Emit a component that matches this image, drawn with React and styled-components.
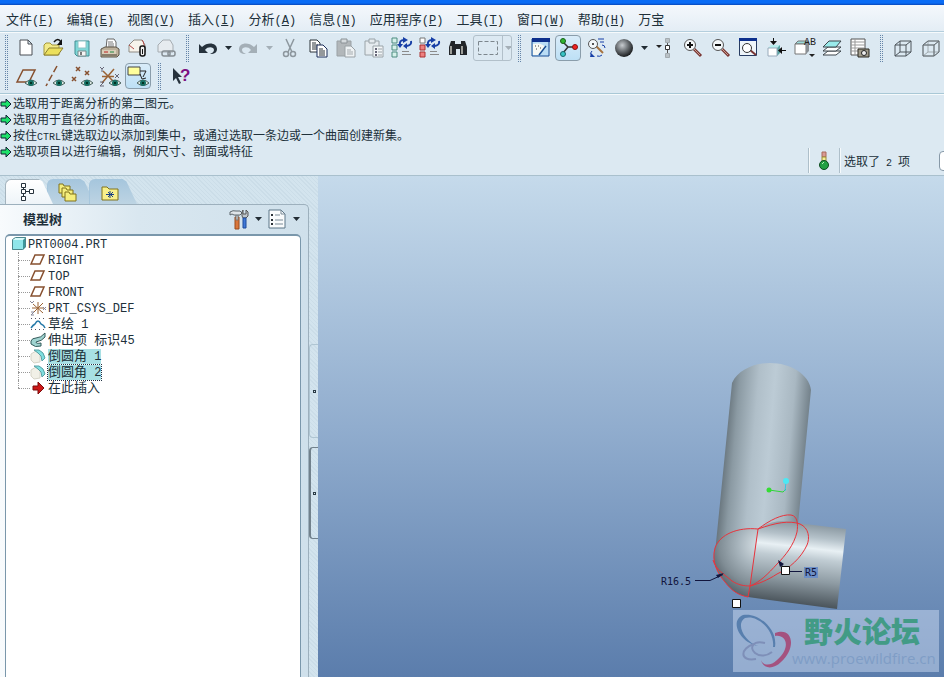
import React from "react";
import styled, { createGlobalStyle } from "styled-components";

const GlobalStyle = createGlobalStyle`
  *, *::before, *::after {
    box-sizing: border-box;
  }
  body {
    margin: 0;
    overflow: hidden;
  }
  button {
    font: inherit;
    color: inherit;
    border: 0;
    padding: 0;
    background: none;
  }
`;

const Window = styled.div`
  display: flex;
  flex-direction: column;
  height: 100vh;
  background: #dce9f2;
  color: #20303a;
  font-family: "Liberation Mono", "Noto Sans CJK SC", monospace;
  font-size: 13px;
`;
const TitleEdge = styled.div`
  flex: none;
  height: 5px;
  background: linear-gradient(#0a6cf5 60%, #0a48b8);
`;
const MenuBar = styled.nav`
  flex: none;
  display: flex;
  gap: 13px;
  height: 27px;
  padding: 5px 6px 0;
  background: linear-gradient(#f4f8fc, #e4edf5);
  border-bottom: 1px solid #b4cedd;
`;
const MenuButton = styled.button`
  white-space: nowrap;
  line-height: 20px;
`;
const Ascii = styled.span`
  font-size: ${(props) => (props.$small ? 10 : 12)}px;
  white-space: pre;
`;

const ToolArea = styled.div`
  flex: none;
  height: 62px;
  padding-top: 1px;
  overflow: hidden;
  border-top: 1px solid #f6fafc;
  border-bottom: 1px solid #a9c8d6;
`;
const ToolRow = styled.div`
  display: flex;
  height: 28px;
  align-items: center;
`;
const Grip = styled.span`
  flex: none;
  width: ${(props) => props.$width}px;
  height: 27px;
  display: flex;
  justify-content: center;
  &::before {
    content: "";
    width: 3px;
    border: dotted #6484a8;
    border-width: 0 1px;
  }
`;
const ToolButton = styled.button`
  flex: none;
  display: flex;
  align-items: center;
  justify-content: center;
  width: 28px;
  height: 28px;
  border-radius: 4px;
`;
const ActiveTool = styled(ToolButton)`
  width: 26px;
  height: 26px;
  margin: 0 1px;
  border: 1px solid #8a9dab;
  background: linear-gradient(#d9ecf9, #bde0f5);
`;
const DropButton = styled(ToolButton)`
  width: ${(props) => props.$width || 12}px;
`;
const SelectBox = styled.div`
  flex: none;
  display: flex;
  align-items: center;
  width: 39px;
  height: 26px;
  margin-left: 1px;
  overflow: hidden;
  border: 1px solid #b2c0ca;
  border-radius: 3px;
  button + button {
    border-left: 1px solid #b2c0ca;
    border-radius: 0;
  }
`;

const MessageArea = styled.div`
  flex: none;
  display: flex;
  justify-content: space-between;
  height: 82px;
  overflow: hidden;
  font-size: 12px;
  border-top: 1px solid #f6fafc;
  border-bottom: 1px solid #a9c0cd;
`;
const Messages = styled.ul`
  list-style: none;
  margin: 0;
  padding: 2px 0 0;
`;
const Message = styled.li`
  display: flex;
  align-items: center;
  gap: 1px;
  height: 16px;
  line-height: 16px;
  white-space: nowrap;
`;
const Status = styled.div`
  align-self: flex-end;
  display: flex;
  align-items: center;
  height: 29px;
`;
const StatusCell = styled.div`
  display: flex;
  align-items: center;
  justify-content: center;
  height: 25px;
  padding: 0 ${(props) => props.$pad}px;
  border-left: 1px solid #aebfca;
  box-shadow: inset 1px 0 #f6fafc;
`;
const FilterSelect = styled.select`
  width: 60px;
  height: 20px;
  margin: 0 -55px 0 25px;
  border: 1px solid #8799a8;
  border-radius: 4px;
  background: #fff;
`;

const Body = styled.div`
  flex: 1;
  min-height: 0;
  display: flex;
`;
const SidePanel = styled.aside`
  flex: none;
  display: flex;
  width: 318px;
  background: repeating-linear-gradient(45deg, #cbdde8 0 1px, #d3e4ee 1px 3px);
`;
const PanelColumn = styled.div`
  flex: 1;
  display: flex;
  flex-direction: column;
`;
const Tabs = styled.div`
  flex: none;
  display: flex;
  padding: 3px 0 0 5px;
`;
const Tab = styled.button`
  position: relative;
  z-index: ${(props) => (props.$active ? 1 : 0)};
  display: flex;
  align-items: center;
  justify-content: center;
  width: 48px;
  height: 25px;
  margin-right: -6px;
  padding-right: 8px;
  border-radius: 6px 0 0 0;
  clip-path: polygon(0 0, 70% 0, 78% 10%, 100% 100%, 0 100%);
  background: ${(props) =>
    props.$active
      ? "linear-gradient(#ffffff, #eef4f8)"
      : "linear-gradient(#a6c6dd, #bdd4e3)"};
  border-left: 1px solid ${(props) => (props.$active ? "#a4b4be" : "#a6c6dd")};
  border-top: 1px solid ${(props) => (props.$active ? "#a4b4be" : "#a6c6dd")};
`;
const Panel = styled.section`
  flex: 1;
  min-height: 0;
  display: flex;
  flex-direction: column;
  padding-right: 7px;
  border-top: 1px solid #9db0bd;
  border-right: 1px solid #9db0bd;
  border-radius: 0 5px 0 0;
  background: linear-gradient(90deg, #f8fbfd, #d9e7f0 45%, #cfe0eb);
`;
const PanelHeader = styled.header`
  flex: none;
  display: flex;
  align-items: center;
  height: 29px;
  padding: 0 0 2px 23px;
`;
const PanelTitle = styled.h2`
  flex: 1;
  margin: 0;
  font-size: 13px;
  font-weight: bold;
`;
const TreeBox = styled.div`
  flex: 1;
  margin-left: 5px;
  padding: 0 4px;
  background: #fff;
  border: 1px solid #7a97ab;
  border-width: 2px 1px 0;
  border-radius: 5px 5px 0 0;
`;
const TreeList = styled.ul`
  list-style: none;
  margin: 0;
  padding: 0;
`;
const TreeRow = styled.div`
  display: flex;
  align-items: center;
  height: 16px;
  line-height: 16px;
  gap: ${(props) => props.$gap}px;
  padding-left: ${(props) => props.$indent}px;
`;
const Branch = styled.span`
  position: relative;
  flex: none;
  width: 12px;
  height: 16px;
  &::before {
    content: "";
    position: absolute;
    left: 0;
    top: 0;
    height: ${(props) => (props.$last ? 8 : 16)}px;
    border-left: 1px dotted #999;
  }
  &::after {
    content: "";
    position: absolute;
    left: 0;
    right: 0;
    top: 8px;
    border-top: 1px dotted #999;
  }
`;
const TreeLabel = styled.span`
  height: 15px;
  line-height: 15px;
  margin-left: ${(props) => (props.$child ? 2 : 0)}px;
  white-space: pre;
  background: ${(props) => (props.$selected ? "#a8e0e4" : "transparent")};
  outline: ${(props) => (props.$focused ? "1px dotted #234" : "none")};
`;
const Splitter = styled.div`
  flex: none;
  display: flex;
  flex-direction: column;
  gap: 9px;
  width: 9px;
  padding-top: 168px;
`;
const SplitHandle = styled.button`
  display: flex;
  align-items: center;
  justify-content: center;
  height: ${(props) => (props.$strong ? 92 : 94)}px;
  border: solid ${(props) => (props.$strong ? "#71818c" : "#afc5d2")};
  border-width: 1px 0 1px ${(props) => (props.$strong ? 2 : 1)}px;
  border-radius: 4px 0 0 4px;
  &::before {
    content: "";
    width: 3px;
    height: 3px;
    border: 1px solid #2a3a44;
  }
`;

const Viewport = styled.main`
  position: relative;
  flex: 1;
  overflow: hidden;
  background: linear-gradient(#c5daeb, #91adce 50%, #5b7dac);
`;
const Model = styled.svg`
  position: absolute;
  right: 0;
  bottom: 0;
`;
const Watermark = styled.div`
  position: absolute;
  right: 5px;
  bottom: 5px;
  display: flex;
  width: 206px;
  height: 62px;
  background: rgba(195, 212, 236, 0.55);
  svg {
    flex: none;
  }
`;
const WatermarkText = styled.div`
  display: flex;
  flex-direction: column;
  white-space: nowrap;
`;
const ForumName = styled.strong`
  padding-left: 12px;
  height: 38px;
  line-height: 40px;
  color: #429b86;
  font-size: 29px;
  font-weight: 900;
  font-family: "Noto Sans CJK SC", sans-serif;
`;
const ForumUrl = styled.a`
  color: #7f9dc6;
  font: 15px/20px "Open Sans", sans-serif;
  text-decoration: none;
`;

const eye = (
  <g>
    <path d="M11 19q6-6 12 0q-6 5-12 0z" fill="#dfe9e4" stroke="#49615c" />
    <circle cx="17" cy="19" r="3" fill="#167064" />
    <path d="M16 18h2v2h-2z" fill="#032" />
  </g>
);
const lens = (
  <g>
    <path d="M14 13l7 7" stroke="#7a3634" strokeWidth="3" />
    <path d="M14 13l6 6" stroke="#c9a08e" />
    <circle cx="10" cy="9" r="5.500" fill="#f4f8fa" stroke="#555" />
  </g>
);
const cycle = (
  <g>
    <path d="M10 9q-1-5 4-5M21 5q1 4-4 5" fill="none" stroke="#173fa6" strokeWidth="2" />
    <path d="M13 1l5 3-5 3zM17 7v6l-4-3zM7 8h6l-3 4z" fill="#173fa6" />
  </g>
);
const listLines = <path d="M12 15.500h7M12 18.500h9" stroke="#8a8a8a" />;
const undoArrow = "M3 8v9h9l-3-3c3-4 9-3 9 0 0 2-2 3-4 4 5 0 7-2 7-5 0-6-9-8-15-2z";
const cube = "M4 9h11v11H4zM9 5h11v11H9zM4 9l5-4M15 9l5-4M4 20l5-4M15 20l5-4";

const icons = {
  new: (
    <path d="M6 4h8l4 4v11H6zM14 4v4h4" fill="#fff" stroke="#4a4f55" />
  ),
  open: (
    <g>
      <path d="M2 9l2-2h4l2 2h7v10H2z" fill="#f2ea88" stroke="#a4963a" />
      <path d="M7 12h14l-5 7H2z" fill="#ece05c" stroke="#8c8030" />
      <path d="M12 6q4-5 7 0" fill="none" stroke="#111" strokeWidth="1.500" />
      <path d="M20 3v6h-5z" fill="#111" />
    </g>
  ),
  save: (
    <g>
      <path d="M5 5h14v15H7l-2-2z" fill="#7fd8d8" stroke="#418d92" />
      <path d="M8 5h8v7H8z" fill="#fff" stroke="#8cc3c6" />
      <path d="M8 15h8v5H8z" fill="#f5f5f5" stroke="#7a8a8c" />
      <path d="M10 16h2v3h-2z" fill="#777" />
    </g>
  ),
  print: (
    <g>
      <path d="M9 3h7l2 3v7H8z" fill="#fff" stroke="#666" />
      <path d="M10 6h5M10 8h6M10 10h6" stroke="#777" />
      <path d="M3 13l4-2h11l3 2v6l-2 2H3z" fill="#bcb09b" stroke="#5d5447" />
      <path d="M4 14h14v4H4z" fill="#d8cdb9" />
      <path d="M6 16h4" stroke="#b22" />
      <path d="M12 16h4" stroke="#284" />
      <path d="M4 19h15" stroke="#50483d" />
    </g>
  ),
  mailClip: (
    <g>
      <path d="M3 9l5-5h8l3 5v7H3z" fill="#f7f4ec" stroke="#8f8b84" />
      <path d="M3 9l5 4M16 4q3 3 2 12" fill="none" stroke="#b54a48" />
      <rect x="14" y="10" width="5" height="10" rx="2" fill="#eee" stroke="#111" strokeWidth="1.500" />
      <path d="M16.500 13v5" stroke="#111" />
    </g>
  ),
  mailLink: (
    <g>
      <path d="M4 9l5-5h7l3 5v7H4z" fill="#e6ebef" stroke="#a5acb1" />
      <rect x="8" y="15" width="8" height="5" rx="2" fill="none" stroke="#858d93" strokeWidth="1.500" />
      <rect x="14" y="15" width="7" height="5" rx="2" fill="none" stroke="#858d93" strokeWidth="1.500" />
    </g>
  ),
  undo: <path d={undoArrow} fill="#26323c" />,
  redo: (
    <path d={undoArrow} transform="matrix(-1 0 0 1 24 0)" fill="#a4afb7" />
  ),
  cut: (
    <g fill="none" stroke="#8d979e" strokeWidth="1.500">
      <path d="M8 3l6 13M16 3l-6 13" />
      <circle cx="8" cy="18" r="2.500" />
      <circle cx="15" cy="18" r="2.500" />
    </g>
  ),
  copy: (
    <g fill="#fff" stroke="#2b3238">
      <path d="M4 4h7l3 3v9H4z" />
      <path d="M6 7h4M6 9h6M6 11h6M6 13h6" />
      <path d="M11 9h6l4 4v8H11z" stroke="#1a2c58" />
      <path d="M13 13h4M13 15h6M13 17h6M13 19h6" />
    </g>
  ),
  paste: (
    <g>
      <path d="M3 5h14v15H3z" fill="#b2b7ba" stroke="#9aa1a5" />
      <path d="M7 3h6v4H7z" fill="#d5dadd" stroke="#8b9296" />
      <path d="M11 10h6l4 4v7H11z" fill="#eef2f4" stroke="#9aa1a5" />
      <path d="M13 14h4M13 16h6M13 18h6" stroke="#a5abaf" />
    </g>
  ),
  pasteSpecial: (
    <g fill="#e5ebef" stroke="#9aa3a8">
      <path d="M3 5h14v14H3z" />
      <path d="M7 3h6v4H7z" />
      <path d="M11 10h10v11H11z" fill="#f3f6f8" />
      <path d="M13 13h2M13 16h2M13 19h2" stroke="#667" strokeWidth="2" />
      <path d="M16 13h4M16 16h4M16 19h4" />
    </g>
  ),
  regen: (
    <g>
      <path d="M2 2h5v5H2zM2 9h5v5H2zM2 16h5v5H2z" fill="#d5f0ea" stroke="#4d8b80" />
      {cycle}
      {listLines}
    </g>
  ),
  regenManager: (
    <g>
      <path d="M2 2h5v5H2z" fill="#fff" stroke="#777" />
      <path d="M2 9h5v5H2zM2 16h5v5H2z" fill="#ee8080" stroke="#a33" />
      {cycle}
      {listLines}
    </g>
  ),
  find: (
    <g fill="#22262a">
      <path d="M5 5h4v3h1v11H3v-8zM15 5h4l2 6v8h-7V8h1z" />
      <path d="M9 8h6v5H9z" />
      <path d="M5 10v8M16 10v8" stroke="#c8c8c0" strokeWidth="1.500" />
    </g>
  ),
  select: (
    <path d="M2.500 5.500h19v13h-19z" fill="none" stroke="#7c868d" strokeDasharray="4 2" />
  ),
  repaint: (
    <g>
      <path d="M4 3h17v17H4z" fill="#b9dcf5" stroke="#174d94" />
      <path d="M4 2h18v4H4z" fill="#0d2f8c" />
      <path d="M5 8q9-2 13 4l-8 7H5z" fill="#f6f8f4" />
      <path d="M18 10l-7 9" stroke="#174d94" strokeWidth="1.500" />
      <path d="M7 10h1M10 10h1M8 13h1M12 12h1" stroke="#444" />
    </g>
  ),
  spin: (
    <g>
      <path d="M7 6l5 5h7M12 11l-5 6" fill="none" stroke="#333" strokeWidth="1.500" />
      <circle cx="7" cy="5" r="2.500" fill="#2fb52f" stroke="#175f17" />
      <circle cx="7" cy="18" r="2.500" fill="#37c4c4" stroke="#17666b" />
      <circle cx="19" cy="11" r="2.500" fill="#e22" stroke="#811" />
    </g>
  ),
  orient: (
    <g>
      <path d="M12 10l7 7" stroke="#a7733f" strokeWidth="2" />
      <circle cx="9" cy="8" r="4.500" fill="#f4f8fa" stroke="#555" />
      <path d="M8 7h2v2H8z" fill="#555" />
      <path d="M14 3h6M16 6h4M18 9q3 0 3 3M8 20q-3-3 0-5M13 20q3 1 5-1" fill="none" stroke="#173fa6" />
      <path d="M7 17l4 4H6z" fill="#173fa6" />
    </g>
  ),
  shade: <circle cx="12" cy="12" r="9" fill="url(#ball)" />,
  nodes: (
    <g>
      <path d="M4 9h6l-3 3z" fill="#222" />
      <path d="M15.500 4v16" stroke="#555" />
      <path d="M13.500 2.500h4v4h-4zM13.500 17.500h4v4h-4z" fill="#b9c1c6" stroke="#a3abb0" />
      <path d="M13.500 9.500h4v4h-4z" fill="#fff" stroke="#333" />
    </g>
  ),
  zoomIn: (
    <g>
      {lens}
      <path d="M7 9h6M10 6v6" stroke="#111" strokeWidth="2" />
    </g>
  ),
  zoomOut: (
    <g>
      {lens}
      <path d="M7 9h6" stroke="#111" strokeWidth="2" />
    </g>
  ),
  refit: (
    <g>
      <path d="M3.500 3v16.500h17V3" fill="#eef5fa" stroke="#273c62" />
      <path d="M3 2h18v3H3z" fill="#0d2f8c" />
      <path d="M14 14l6 5" stroke="#7a3634" strokeWidth="2" />
      <circle cx="11" cy="12" r="4.500" fill="#fff" stroke="#333" />
    </g>
  ),
  reorient: (
    <g>
      <path d="M4 12l3-3h9l-3 3z" fill="#b6eeee" />
      <path d="M13 12l3-3v8l-3 3z" fill="#5aa3a3" />
      <path d="M4 12h9v8H4z" fill="#fff" stroke="#9ab" />
      <path d="M9.500 2v5M22 14.500h-5" stroke="#111" />
      <path d="M6 5h7l-3.500 4zM18 11v7l-4-3.500z" fill="#111" />
    </g>
  ),
  savedViews: (
    <g>
      <path d="M3 8l3-3h10l-2 3z" fill="#9adada" stroke="#777" />
      <path d="M3 8h11v10H3z" fill="#fff" stroke="#777" />
      <path d="M14 8l3-3v10l-3 3z" fill="#8a9095" />
      <path d="M17 18h6l-3 3z" fill="#222" />
      <text x="12" y="9" fontSize="10" fill="#222" fontFamily="Liberation Mono, monospace">
        AB
      </text>
    </g>
  ),
  layers: (
    <g stroke="#3d454a">
      <path d="M3 19l5-4h13l-5 4z" fill="#fff" />
      <path d="M3 15l5-4h13l-5 4z" fill="#fff" />
      <path d="M3 11l6-6h12l-5 6z" fill="#9aeaea" />
    </g>
  ),
  viewManager: (
    <g>
      <path d="M3 3h14v16H3z" fill="#fff" stroke="#555" />
      <path d="M3 6h14M3 9h14M3 12h14M3 15h14M7 3v16" stroke="#999" />
      <path d="M10 13h11v8H10z" fill="#a19c8c" stroke="#28261f" />
      <circle cx="16" cy="17" r="2.500" fill="#eee" stroke="#222" />
    </g>
  ),
  wireframe: <path d={cube} fill="none" stroke="#4c545a" />,
  hiddenLine: (
    <g fill="none">
      <path d={cube} stroke="#a0a9ae" />
      <path d="M4 9h11v11H4zM4 9l5-4h11v11l-5 4M15 9l5-4" stroke="#656d73" />
    </g>
  ),
  plane: (
    <g>
      <path d="M3 18L9 6h12l-6 12z" fill="none" stroke="#87502f" strokeWidth="1.500" />
      {eye}
    </g>
  ),
  axis: (
    <g>
      <path d="M15 2L4 22" stroke="#87502f" strokeWidth="1.500" strokeDasharray="7 3" />
      {eye}
    </g>
  ),
  points: (
    <g>
      <path d="M6 3l4 4M10 3l-4 4M15 7l4 4M19 7l-4 4M2 13l4 4M6 13l-4 4" stroke="#87502f" strokeWidth="1.500" />
      {eye}
    </g>
  ),
  csys: (
    <g>
      <path d="M4 12.500h12M5 7l11 11M16 5L4 19" stroke="#9a6335" strokeWidth="1.500" />
      <path d="M2 3l2 2 2-2M4 5v3M2 18h4l-4 4h4M17 10l4 4M21 10l-4 4" fill="none" stroke="#667" />
      {eye}
    </g>
  ),
  annotation: (
    <g>
      <path d="M2 3h12v8H2z" fill="#ffff9c" stroke="#444" />
      <path d="M14 7h6l-3 6M14 10l2 5 4-1" fill="none" stroke="#222" />
      {eye}
    </g>
  ),
  help: (
    <g>
      <path d="M5 4v13l3-3 3 6 2-1-3-6h4z" fill="#26323c" />
      <text x="12" y="17" fontSize="17" fontWeight="bold" fill="#7d1080" fontFamily="Liberation Sans, sans-serif">
        ?
      </text>
    </g>
  ),
  modelTree: (
    <g fill="#fff" stroke="#26323c">
      <path d="M9.500 6v12M9.500 11.500h8" />
      <path d="M7.500 3.500h4v4h-4zM7.500 9.500h4v4h-4zM7.500 16.500h4v4h-4zM15.500 9.500h4v4h-4z" />
    </g>
  ),
  folders: (
    <g fill="#f5ee7c" stroke="#80731c">
      <path d="M3 4h4l1 2h6v7H3z" />
      <path d="M6 8h4l1 2h6v7H6z" />
      <path d="M9 12h4l1 2h6v7H9z" />
    </g>
  ),
  favorites: (
    <g>
      <path d="M4 7h5l2 2h9v11H4z" fill="#f8f08a" stroke="#80731c" />
      <path d="M12 11v7M8 14.500h8M10 12l5 5M15 12l-5 5" stroke="#173f86" />
    </g>
  ),
  tools: (
    <g>
      <path d="M8 10h4v12H8z" fill="#d9763b" stroke="#9a4a1c" />
      <path d="M9 7h2v6H9z" fill="#d9dde0" stroke="#777" />
      <path d="M3 5q3-2 6-1h4l2 2-2 2H7Q5 6 3 8z" fill="#dfe5e9" stroke="#5d666c" />
      <path d="M16 3v4h3V3l2 2v4l-2 2h-3l-1-2V5z" fill="#bfc6cb" stroke="#555" />
      <path d="M16 11h3v10h-3z" fill="#3f78d8" stroke="#1f4a9a" />
    </g>
  ),
  show: (
    <g>
      <path d="M4 3h12l4 4v14H4z" fill="#f9fbfc" stroke="#5d7688" />
      <path d="M16 3v4h4M10 8h5M10 13h8M10 17h8" fill="none" stroke="#7a8b97" />
      <path d="M6 7h2v2H6zM6 12h2v2H6zM6 16h2v2H6z" fill="#2b3238" />
    </g>
  ),
};

const treeIcons = {
  part: (
    <g>
      <path d="M1 4l3-3h11l-3 3z" fill="#d8fafa" />
      <path d="M12 4l3-3v10l-3 3z" fill="#3c979c" />
      <path d="M1 4h11v10H1z" fill="#8fe6ea" />
      <path d="M1.500 13.500v-10l3-2h10v9l-3 3z" fill="none" stroke="#4c868c" />
    </g>
  ),
  plane: (
    <path d="M1 12L5 3h9l-4 9z" fill="none" stroke="#87502f" strokeWidth="1.500" />
  ),
  csys: (
    <g>
      <path d="M2 8h12M8 2v12M3 4l10 9M13 3L3 13" stroke="#9a6335" />
      <path d="M0 1l2 2 2-2M1 12h3l-3 3h3M13 7l3 3M16 7l-3 3" fill="none" stroke="#889" />
    </g>
  ),
  sketch: (
    <g>
      <path d="M1 2.500h13M1 13.500h13" stroke="#556" strokeDasharray="1 3" />
      <path d="M1 12q2-3 4-4 3-6 6 0 3 1 4 4" fill="none" stroke="#2679a8" strokeWidth="1.500" />
    </g>
  ),
  sweep: (
    <path d="M1 9q1-3 5-3 5 0 9-5v4q-3 4-9 5 0 2 5 1v3Q5 16 1 12z" fill="#9fd3d0" stroke="#345c5c" />
  ),
  round: (
    <g>
      <path d="M1 6l5-3 4 4v7l-6 1-3-3z" fill="#f1f0e7" stroke="#d6d4c8" />
      <path d="M4 2h5q5 2 6 8l-3 3q0-6-4-8z" fill="#7fdfe0" stroke="#58a0a4" />
    </g>
  ),
  insert: (
    <path d="M3 6h5V2l6 6-6 6v-4H3z" fill="#cc1717" stroke="#7c0d0d" />
  ),
};

const menus = [
  ["文件", "F"],
  ["编辑", "E"],
  ["视图", "V"],
  ["插入", "I"],
  ["分析", "A"],
  ["信息", "N"],
  ["应用程序", "P"],
  ["工具", "T"],
  ["窗口", "W"],
  ["帮助", "H"],
  ["万宝"],
];

const messages = [
  "选取用于距离分析的第二图元。",
  "选取用于直径分析的曲面。",
  "按住CTRL键选取边以添加到集中，或通过选取一条边或一个曲面创建新集。",
  "选取项目以进行编辑，例如尺寸、剖面或特征",
];

const features = [
  { icon: "plane", name: "RIGHT" },
  { icon: "plane", name: "TOP" },
  { icon: "plane", name: "FRONT" },
  { icon: "csys", name: "PRT_CSYS_DEF" },
  { icon: "sketch", name: "草绘 1" },
  { icon: "sweep", name: "伸出项 标识45" },
  { icon: "round", name: "倒圆角 1", selected: true },
  { icon: "round", name: "倒圆角 2", selected: true, focused: true },
  { icon: "insert", name: "在此插入" },
];

// Latin runs are set smaller so they keep half the width of a Chinese glyph
const Mixed = ({ text, small }) =>
  text
    .split(/([\x20-\x7e]+)/)
    .filter(Boolean)
    .map((part, i) =>
      /^[\x20-\x7e]/.test(part) ? (
        <Ascii key={i} $small={small}>
          {part}
        </Ascii>
      ) : (
        part
      )
    );

const Icon = ({ name }) => (
  <svg width="24" height="24" viewBox="0 0 24 24" aria-hidden="true">
    {icons[name]}
  </svg>
);

const Tool = ({ name }) => (
  <ToolButton aria-label={name}>
    <Icon name={name} />
  </ToolButton>
);

const Drop = ({ label, width, color = "#222c34" }) => (
  <DropButton aria-label={label} $width={width}>
    <svg width="7" height="4" viewBox="0 0 7 4">
      <path d="M0 0h7L3.500 4z" fill={color} />
    </svg>
  </DropButton>
);

const Toolbars = () => (
  <ToolArea>
    <ToolRow>
      <Grip $width={12} />
      {["new", "open", "save", "print", "mailClip", "mailLink"].map((name) => (
        <Tool key={name} name={name} />
      ))}
      <Grip $width={14} />
      <Tool name="undo" />
      <Drop label="undo list" />
      <Tool name="redo" />
      <Drop label="redo list" width={14} color="#a4afb7" />
      {["cut", "copy", "paste", "pasteSpecial", "regen", "regenManager", "find"].map(
        (name) => (
          <Tool key={name} name={name} />
        )
      )}
      <SelectBox>
        <Tool name="select" />
        <Drop label="select options" color="#a4afb7" />
      </SelectBox>
      <Grip $width={14} />
      <Tool name="repaint" />
      <ActiveTool aria-label="spin" aria-pressed="true">
        <Icon name="spin" />
      </ActiveTool>
      <Tool name="orient" />
      <Tool name="shade" />
      <Drop label="shade options" />
      <Tool name="nodes" />
      {[
        "zoomIn",
        "zoomOut",
        "refit",
        "reorient",
        "savedViews",
        "layers",
        "viewManager",
      ].map((name) => (
        <Tool key={name} name={name} />
      ))}
      <Grip $width={15} />
      <Tool name="wireframe" />
      <Tool name="hiddenLine" />
    </ToolRow>
    <ToolRow>
      <Grip $width={12} />
      {["plane", "axis", "points", "csys"].map((name) => (
        <Tool key={name} name={name} />
      ))}
      <ActiveTool aria-label="annotation" aria-pressed="true">
        <Icon name="annotation" />
      </ActiveTool>
      <Grip $width={14} />
      <Tool name="help" />
    </ToolRow>
  </ToolArea>
);

const MessageLog = () => (
  <MessageArea>
    <Messages>
      {messages.map((message) => (
        <Message key={message}>
          <svg width="12" height="14" viewBox="0 0 12 14">
            <path d="M1 4h5V1l5 5-5 5V8H1z" fill="#1fe06a" stroke="#123" />
          </svg>
          <span>
            <Mixed text={message} small />
          </span>
        </Message>
      ))}
    </Messages>
    <Status>
      <StatusCell $pad={9}>
        <svg width="12" height="20" viewBox="0 0 12 20">
          <path d="M4 1h4v5H4z" fill="#d99a94" stroke="#a96a5c" />
          <path d="M4 6h4v5H4z" fill="#f3ee96" stroke="#9a8b34" />
          <circle cx="6" cy="14" r="4.500" fill="#22a044" stroke="#0c4a20" />
          <path d="M4 13l2-2" stroke="#b4f0bc" />
        </svg>
      </StatusCell>
      <StatusCell $pad={4}>
        <span>
          <Mixed text="选取了 2 项" small />
        </span>
      </StatusCell>
      <FilterSelect aria-label="filter" />
    </Status>
  </MessageArea>
);

const ModelTree = () => (
  <SidePanel>
    <PanelColumn>
      <Tabs>
        <Tab $active aria-label="model tree">
          <Icon name="modelTree" />
        </Tab>
        <Tab aria-label="folders">
          <Icon name="folders" />
        </Tab>
        <Tab aria-label="favorites">
          <Icon name="favorites" />
        </Tab>
      </Tabs>
      <Panel>
        <PanelHeader>
          <PanelTitle>模型树</PanelTitle>
          <Tool name="tools" />
          <Drop label="tree settings" width={10} />
          <Tool name="show" />
          <Drop label="tree display" width={10} />
        </PanelHeader>
        <TreeBox>
          <TreeRow $gap={1} $indent={1}>
            <svg width="16" height="16" viewBox="0 0 16 16">
              {treeIcons.part}
            </svg>
            <TreeLabel>
              <Mixed text="PRT0004.PRT" />
            </TreeLabel>
          </TreeRow>
          <TreeList>
            {features.map((feature, i) => (
              <li key={feature.name}>
                <TreeRow $gap={0} $indent={8}>
                  <Branch $last={i === features.length - 1} />
                  <svg width="16" height="16" viewBox="0 0 16 16">
                    {treeIcons[feature.icon]}
                  </svg>
                  <TreeLabel
                    $child
                    $selected={feature.selected}
                    $focused={feature.focused}
                  >
                    <Mixed text={feature.name} />
                  </TreeLabel>
                </TreeRow>
              </li>
            ))}
          </TreeList>
        </TreeBox>
      </Panel>
    </PanelColumn>
    <Splitter>
      <SplitHandle aria-label="collapse panel" />
      <SplitHandle $strong aria-label="expand panel" />
    </Splitter>
  </SidePanel>
);

const PipeModel = () => (
  <Model width="304" height="337" viewBox="640 340 304 337">
    <defs>
      <linearGradient id="upright" gradientUnits="userSpaceOnUse" x1="724" y1="450" x2="805" y2="457">
        <stop offset="0" stopColor="#69767e" />
        <stop offset="0.120" stopColor="#8b9aa3" />
        <stop offset="0.350" stopColor="#b0bfc9" />
        <stop offset="0.550" stopColor="#bccbd5" />
        <stop offset="0.800" stopColor="#a9b8c2" />
        <stop offset="1" stopColor="#74828b" />
      </linearGradient>
      <linearGradient id="branch" gradientUnits="userSpaceOnUse" x1="801" y1="524" x2="792" y2="603">
        <stop offset="0" stopColor="#8e9ca5" />
        <stop offset="0.150" stopColor="#b4c1c9" />
        <stop offset="0.290" stopColor="#e8f0f4" />
        <stop offset="0.420" stopColor="#c0ccd3" />
        <stop offset="0.700" stopColor="#8d9aa2" />
        <stop offset="1" stopColor="#4c565d" />
      </linearGradient>
      <radialGradient id="elbow" gradientUnits="userSpaceOnUse" cx="760" cy="545" r="54">
        <stop offset="0" stopColor="#dbe4e9" />
        <stop offset="0.400" stopColor="#a8b5bd" />
        <stop offset="0.750" stopColor="#808d95" />
        <stop offset="1" stopColor="#56626a" />
      </radialGradient>
    </defs>
    <path
      d="M732 383C738 370 754 363 770 363C790 363 809 374 811 390L798 524L758 540L714 560L716 543z"
      fill="url(#upright)"
    />
    <path d="M758 529C770 520 784 520 797 523L846 529L837 609L748 597L750 586z" fill="url(#branch)" />
    <path
      d="M758 529C738 527 720 534 715 548C711 562 718 574 725 582C732 591 738 595 748 597L750 586z"
      fill="url(#elbow)"
    />
    <g fill="none" stroke="#e8343c">
      <path d="M758 529C738 527 720 534 715 548C711 562 718 574 725 582C732 591 738 595 748 597" />
      <path d="M713 560C716 570 724 574 732 581C738 585 744 586 750 586" />
      <path d="M758 529L750 586L748 597" />
      <path d="M758 529C770 520 782 514 791 515C798 516 798 525 797 532C794 545 785 556 777 564C768 574 760 582 750 586" />
      <path d="M758 529C775 523 789 520 800 524C809 528 810 538 807 545C801 558 790 568 777 574C768 580 758 584 750 586" />
    </g>
    <path d="M769 490l14 2 3-3" fill="none" stroke="#2fd43a" />
    <circle cx="769" cy="490" r="2.500" fill="#34dd34" />
    <path d="M786 482l-1 9" stroke="#35c5e6" />
    <circle cx="786" cy="481" r="3" fill="#4be8f4" />
    <g fill="none" stroke="#11153d">
      <path d="M695 580.500h15l13-6" />
      <path d="M779 562l6 7M790 571.500h12" />
    </g>
    <path d="M724 573l-8 2 2 3zM778 560l2 7 4-3z" fill="#11153d" />
    <path d="M732.500 599.500h8v8h-8zM781.500 566.500h8v8h-8z" fill="#fff" stroke="#111" />
    <path d="M804 567h14v11h-14z" fill="#6d8fc6" />
    <g fill="#11153d" fontFamily="DejaVu Sans Mono, monospace" fontSize="10">
      <text x="661" y="585">
        R16.5
      </text>
      <text x="805" y="576">
        R5
      </text>
    </g>
  </Model>
);

const App = () => (
  <Window>
    <GlobalStyle />
    <svg width="0" height="0" style={{ position: "absolute" }}>
      <radialGradient id="ball" cx="0.400" cy="0.350" r="0.650">
        <stop offset="0" stopColor="#c8ccd0" />
        <stop offset="0.500" stopColor="#6d7276" />
        <stop offset="1" stopColor="#1b1d1f" />
      </radialGradient>
    </svg>
    <TitleEdge />
    <MenuBar>
      {menus.map(([label, key]) => (
        <MenuButton key={label}>
          {label}
          {key && (
            <Ascii>
              (<u>{key}</u>)
            </Ascii>
          )}
        </MenuButton>
      ))}
    </MenuBar>
    <Toolbars />
    <MessageLog />
    <Body>
      <ModelTree />
      <Viewport>
        <PipeModel />
        <Watermark>
          <svg width="59" height="62" viewBox="0 0 59 62">
            <path
              d="M42 37C45 18 24 2 10 5C-4 11 7 33 25 36C12 32 2 14 12 8C24 4 42 20 40 37z"
              fill="#587fae"
            />
            <path
              d="M42 23C60 16 64 38 48 52C40 60 30 59 28 50C30 56 38 56 44 50C58 38 54 24 42 26z"
              fill="#a4527f"
            />
            <path
              d="M21 34C7 38 6 52 23 49M32 33C20 30 16 38 22 43C27 47 34 46 39 42"
              fill="none"
              stroke="#7e8fb8"
              strokeWidth="2"
            />
          </svg>
          <WatermarkText>
            <ForumName>野火论坛</ForumName>
            <ForumUrl href="#forum">www.proewildfire.cn</ForumUrl>
          </WatermarkText>
        </Watermark>
      </Viewport>
    </Body>
  </Window>
);

export default App;
